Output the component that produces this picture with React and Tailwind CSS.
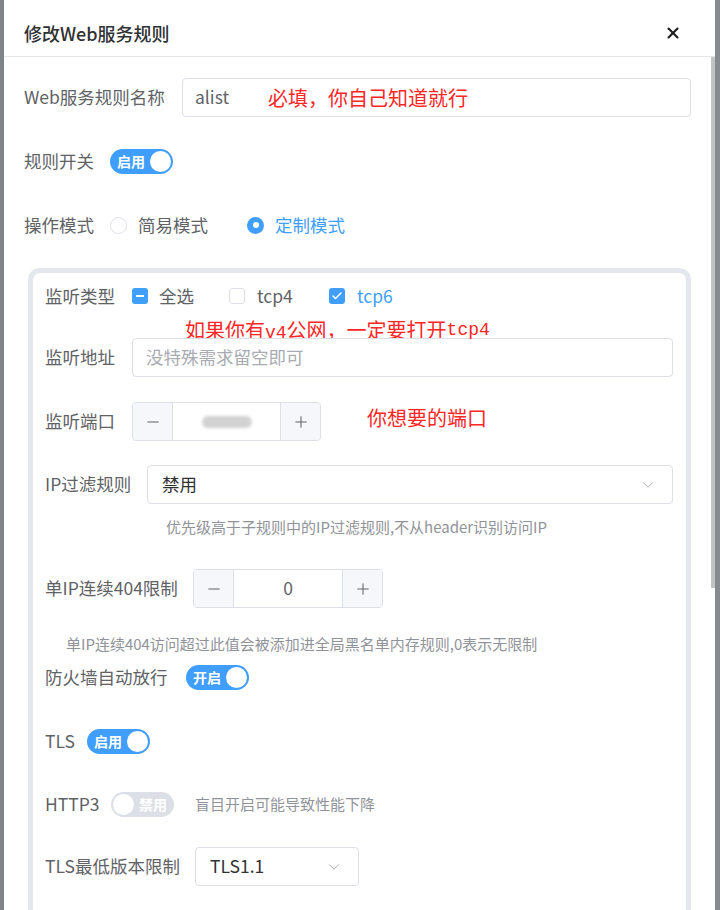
import { X, Minus, Plus, ChevronDown, Check } from "lucide-react";

const FONT = "font-['Noto_Sans_CJK_SC','Noto_Sans',sans-serif]";

function Switch({ on, text }) {
  if (on) {
    return (
      <div className="flex items-center h-[25px] w-[63px] rounded-full bg-[#409eff] pl-[7px] pr-[2px]">
        <span className="text-[14px] font-bold text-white leading-none">{text}</span>
        <span className="ml-auto w-[21px] h-[21px] rounded-full bg-white" />
      </div>
    );
  }
  return (
    <div className="flex items-center h-[25px] w-[63px] rounded-full bg-[#dcdfe6] pl-[2px] pr-[7px]">
      <span className="w-[21px] h-[21px] rounded-full bg-white" />
      <span className="ml-auto text-[14px] font-bold text-white leading-none">{text}</span>
    </div>
  );
}

function NumberBox({ width, children }) {
  return (
    <div className={`flex h-[39px] border border-[#dcdfe6] rounded-[4px] overflow-hidden ${width}`}>
      <div className="w-[40px] bg-[#f5f7fa] border-r border-[#dcdfe6] flex items-center justify-center text-[#606266]">
        <Minus size={18} strokeWidth={1.4} />
      </div>
      <div className="flex-1 bg-white flex items-center justify-center text-[17.5px] text-[#606266]">
        {children}
      </div>
      <div className="w-[40px] bg-[#f5f7fa] border-l border-[#dcdfe6] flex items-center justify-center text-[#606266]">
        <Plus size={18} strokeWidth={1.4} />
      </div>
    </div>
  );
}

function Select({ value, width }) {
  return (
    <div className={`flex items-center h-[39px] border border-[#dcdfe6] rounded-[4px] bg-white pl-[14px] pr-[15px] ${width}`}>
      <span className="text-[17.5px] text-[#303133]">{value}</span>
      <ChevronDown size={18} strokeWidth={1.3} className="ml-auto text-[#a8abb2]" />
    </div>
  );
}

function Row({ label, labelWidth, className, children }) {
  return (
    <div className={`flex items-center ${className}`}>
      <div className={`shrink-0 text-[17.5px] text-[#606266] ${labelWidth}`}>{label}</div>
      {children}
    </div>
  );
}

export default function App() {
  return (
    <div className={`flex w-[720px] h-[910px] overflow-hidden bg-[#878b8f] ${FONT}`}>
      <div className="w-[4px] shrink-0 bg-[#7f8489]" />
      <div className="w-[711px] shrink-0 bg-white flex flex-col">
        <div className="h-[57px] shrink-0 border-b border-[#e6e6e6] flex items-center pt-[10px] pl-[20px] pr-[33px]">
          <span className="text-[18px] font-medium text-[#303133]">修改Web服务规则</span>
          <X size={18} strokeWidth={2.8} className="ml-auto text-[#1f1f1f]" />
        </div>

        <div className="flex flex-1 min-h-0">
          <div className="flex-1 pl-[20px] pr-[20px]">
            <Row label="Web服务规则名称" labelWidth="w-[158px]" className="mt-[21px] h-[39px]">
              <div className="flex-1 h-[39px] border border-[#dcdfe6] rounded-[4px] flex items-center pl-[12px]">
                <span className="text-[17.5px] text-[#606266]">alist</span>
                <span className="ml-[39px] text-[20px] text-[#ff2626]">必填，你自己知道就行</span>
              </div>
            </Row>

            <Row label="规则开关" labelWidth="w-[86px]" className="mt-[24px] h-[40px]">
              <Switch on text="启用" />
            </Row>

            <Row label="操作模式" labelWidth="w-[86px]" className="mt-[24px] h-[40px]">
              <div className="flex items-center gap-[11px] w-[137px]">
                <span className="w-[17px] h-[17px] rounded-full border border-[#dcdfe6] bg-white" />
                <span className="text-[17.5px] text-[#606266]">简易模式</span>
              </div>
              <div className="flex items-center gap-[11px]">
                <span className="w-[17px] h-[17px] rounded-full bg-[#409eff] flex items-center justify-center">
                  <span className="w-[6px] h-[6px] rounded-full bg-white" />
                </span>
                <span className="text-[17.5px] text-[#409eff]">定制模式</span>
              </div>
            </Row>

            <div className="mt-[23px] ml-[4px] w-[663px] border-[5px] border-b-0 border-[#e4e7ed] rounded-t-[12px] pl-[12px] pr-[13px] pt-[6px] pb-[40px]">
              <Row label="监听类型" labelWidth="w-[87px]" className="h-[34px]">
                <div className="flex items-center gap-[11px] w-[97px]">
                  <span className="w-[16px] h-[16px] rounded-[3px] bg-[#409eff] flex items-center justify-center">
                    <span className="w-[8px] h-[2px] bg-white" />
                  </span>
                  <span className="text-[17.5px] text-[#606266]">全选</span>
                </div>
                <div className="flex items-center gap-[12px] w-[100px]">
                  <span className="w-[16px] h-[16px] rounded-[3px] border border-[#dcdfe6] bg-white" />
                  <span className="text-[17.5px] text-[#606266]">tcp4</span>
                </div>
                <div className="flex items-center gap-[12px]">
                  <span className="w-[16px] h-[16px] rounded-[3px] bg-[#409eff] flex items-center justify-center text-white">
                    <Check size={12} strokeWidth={3} />
                  </span>
                  <span className="text-[17.5px] text-[#409eff]">tcp6</span>
                </div>
              </Row>

              <div className="mt-[5px] h-[24px] leading-[24px] pl-[140px] text-[20px] text-[#ff2626] whitespace-nowrap">
                如果你有<span className="font-['Liberation_Mono',monospace] text-[18px]">v4</span>公网，一定要打开
                <span className="font-['Liberation_Mono',monospace] text-[18px] relative top-[-3px]">tcp4</span>
              </div>

              <Row label="监听地址" labelWidth="w-[87px]" className="mt-[-4px] h-[39px]">
                <div className="flex-1 h-[39px] border border-[#dcdfe6] rounded-[4px] bg-white flex items-center pl-[13px]">
                  <span className="text-[17.5px] text-[#a8abb2]">没特殊需求留空即可</span>
                </div>
              </Row>

              <Row label="监听端口" labelWidth="w-[87px]" className="mt-[25px] h-[39px]">
                <NumberBox width="w-[189px]">
                  <span className="w-[50px] h-[12px] rounded-full bg-[#d2d2d2] blur-[1.5px]" />
                </NumberBox>
                <span className="ml-[46px] mt-[-8px] text-[20px] text-[#ff2626]">你想要的端口</span>
              </Row>

              <Row label="IP过滤规则" labelWidth="w-[102px]" className="mt-[24px] h-[39px]">
                <Select value="禁用" width="flex-1" />
              </Row>

              <div className="mt-[13px] h-[20px] leading-[20px] pl-[121px] text-[15px] text-[#909399]">
                优先级高于子规则中的IP过滤规则,不从header识别访问IP
              </div>

              <Row label="单IP连续404限制" labelWidth="w-[148px]" className="mt-[32px] h-[39px]">
                <NumberBox width="w-[190px]">0</NumberBox>
              </Row>

              <div className="mt-[26px] h-[20px] leading-[20px] pl-[21px] text-[15px] text-[#909399]">
                单IP连续404访问超过此值会被添加进全局黑名单内存规则,0表示无限制
              </div>

              <Row label="防火墙自动放行" labelWidth="w-[141px]" className="mt-[8px] h-[30px]">
                <Switch on text="开启" />
              </Row>

              <Row label="TLS" labelWidth="w-[42px]" className="mt-[34px] h-[30px]">
                <Switch on text="启用" />
              </Row>

              <Row label="HTTP3" labelWidth="w-[66px]" className="mt-[33px] h-[30px]">
                <Switch on={false} text="禁用" />
                <span className="ml-[21px] text-[15px] text-[#909399]">盲目开启可能导致性能下降</span>
              </Row>

              <Row label="TLS最低版本限制" labelWidth="w-[150px]" className="mt-[28px] h-[39px]">
                <Select value="TLS1.1" width="w-[164px]" />
              </Row>
            </div>
          </div>

          <div className="w-[7px] shrink-0 pr-[1px]">
            <div className="h-[531px] w-[6px] bg-[#c3c3c3]" />
          </div>
        </div>
      </div>
      <div className="flex-1 bg-[#868b90]" />
    </div>
  );
}
